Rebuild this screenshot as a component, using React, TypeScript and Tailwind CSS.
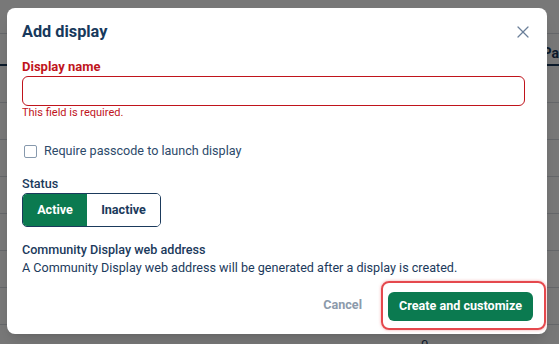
import { X } from "lucide-react";

/* BACKGROUND TABLE (behind the overlay) */
const rows = [0, 1, 2, 3, 4, 5, 6, 7];

const PageBehind = () => {
  return (
    <div className="flex flex-col bg-white">
      <div className="h-[34px] border-b border-[#d6dbe1]" />
      <div className="flex h-[32px] border-b-2 border-[#1b3a5c]">
        <div className="w-[547px]" />
        <span className="pt-[9px] text-[14px] font-bold text-[#1b3a5c]">Pa</span>
      </div>
      {rows.map((r) => (
        <div key={r} className="flex h-[37px] border-b border-[#d6dbe1]">
          {r === 7 && <span className="pl-[421px] pt-[10px] text-[13px] text-[#1b3a5c]">0</span>}
        </div>
      ))}
    </div>
  );
};

/* MODAL */
export default function App() {
  return (
    <div className="relative h-[344px] w-[559px] overflow-hidden font-['Roboto',sans-serif]">
      <PageBehind />
      <div className="absolute inset-0 bg-[rgba(0,0,0,0.53)]" />

      <div className="absolute left-[7px] top-[8px] flex h-[326px] w-[540px] flex-col rounded-[8px] bg-white pl-[15px] pr-[14px] pt-[14px] shadow-lg">
        {/* header */}
        <div className="flex h-[20px] items-center justify-between">
          <h2 className="text-[16.3px] font-bold leading-[20px] text-[#17395c]">Add display</h2>
          <X size={20} strokeWidth={1.5} className="text-[#6b7f99]" />
        </div>

        {/* display name */}
        <label className="mt-[16px] text-[13px] font-bold leading-[18px] text-[#c0141c]">Display name</label>
        <input
          className="mr-[8px] h-[30px] rounded-[6px] border-[1.5px] border-[#c0141c] px-2 text-[13px] outline-none"
          aria-invalid="true"
        />
        <p className="text-[11px] leading-[14px] text-[#c0141c]">This field is required.</p>

        {/* passcode */}
        <div className="mt-[21px] flex h-[20px] items-center gap-[7px] pl-[2px]">
          <span className="h-[13px] w-[13px] rounded-[2px] border-[1.5px] border-[#8799ad]" />
          <span className="text-[12.6px] text-[#2d4a6a]">Require passcode to launch display</span>
        </div>

        {/* status */}
        <p className="mt-[15px] text-[12.6px] font-medium leading-[16px] text-[#1b3a5c]">Status</p>
        <div className="mt-[1px] flex h-[34px] w-[139px] overflow-hidden rounded-[5px] border border-[#1b3a5c]">
          <button className="w-[64px] bg-[#0b7a50] text-[12.6px] font-bold text-white">Active</button>
          <button className="flex-1 bg-white text-[12.6px] font-bold text-[#1b3a5c]">Inactive</button>
        </div>

        {/* web address */}
        <p className="mt-[15px] text-[12.6px] font-medium leading-[16px] text-[#1b3a5c]">Community Display web address</p>
        <p className="text-[12.6px] leading-[20px] text-[#1b3a5c]">
          A Community Display web address will be generated after a display is created.
        </p>

        {/* footer */}
        <div className="mt-[3px] flex items-center justify-end">
          <button className="mr-[19px] text-[12.6px] font-bold text-[#8c9aab]">Cancel</button>
          <div className="-mr-[13px] rounded-[8px] border-2 border-[#e5484d] pb-[7px] pl-[5px] pr-[11px] pt-[9px] shadow-[0_0_3px_rgba(229,72,77,0.5)]">
            <button className="h-[29px] w-[145px] rounded-[6px] bg-[#0b7a50] text-[12.6px] font-bold text-white">
              Create and customize
            </button>
          </div>
        </div>
      </div>
    </div>
  );
}
